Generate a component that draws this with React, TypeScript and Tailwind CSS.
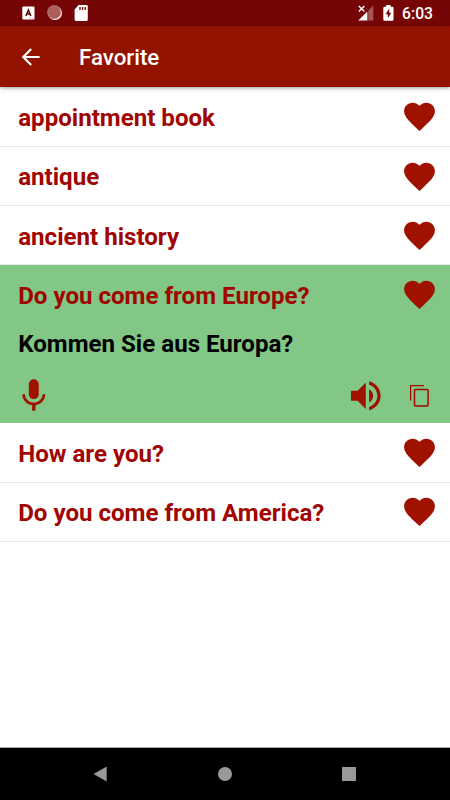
import React from "react"

interface Phrase {
  id: number
  text: string
  translation?: string
}

const PHRASES: Phrase[] = [
  { id: 1, text: "appointment book" },
  { id: 2, text: "antique" },
  { id: 3, text: "ancient history" },
  { id: 4, text: "Do you come from Europe?", translation: "Kommen Sie aus Europa?" },
  { id: 5, text: "How are you?" },
  { id: 6, text: "Do you come from America?" },
]

const StatusBar: React.FC = () => (
  <div className="flex h-[26px] shrink-0 items-center bg-[#760606] pl-[22px] pr-[17px] text-white">
    {/* Keyboard */}
    <svg width="13" height="14" viewBox="0 0 13 14">
      <rect x="0.3" y="0.5" width="12.2" height="13" rx="1" fill="white" />
      <path d="M3.9 10 6.4 3.9 8.9 10M4.8 8h3.2" fill="none" stroke="#5a0505" strokeWidth="1.5" />
      <path d="M7 12h4" stroke="#c99" strokeWidth="0.9" strokeDasharray="1 0.6" />
    </svg>
    {/* Sync spinner */}
    <svg className="ml-3" width="16" height="16" viewBox="0 0 16 16">
      <circle cx="8" cy="8" r="7" fill="white" />
      <circle cx="7.2" cy="7.2" r="6.9" fill="#ad5c5c" />
      <circle cx="7.2" cy="7.2" r="6.5" fill="none" stroke="#d09a9a" strokeWidth="0.9" strokeDasharray="1 1" />
    </svg>
    {/* SD card */}
    <svg className="ml-[11px]" width="14" height="16" viewBox="0 0 14 16">
      <path d="M4.6 0H12.4A1.4 1.4 0 0 1 13.8 1.4V14.6A1.4 1.4 0 0 1 12.4 16H2A1.4 1.4 0 0 1 .6 14.6V4.4z" fill="white" />
      <path d="M6 2v3M8.6 2v3M11.2 2v3" stroke="#760606" strokeWidth="1.3" />
    </svg>
    {/* Signal */}
    <svg className="ml-auto" width="16" height="16" viewBox="0 0 16 16">
      <path d="M9.4 6.4v9.2H.2z" fill="white" />
      <path d="M10.2 5.6 15.3.6v15H10.2z" fill="#a55656" />
      <path d="m.8 1 5.6 5.6M6.4 1 .8 6.6" stroke="white" strokeWidth="1.4" />
    </svg>
    {/* Battery */}
    <svg className="ml-[9px]" width="11" height="16" viewBox="0 0 11 16">
      <path d="M3.2 0h4.4v1.7h1.7q1.2 0 1.2 1.2v11.6q0 1.2-1.2 1.2H1.5q-1.2 0-1.2-1.2V2.9q0-1.2 1.2-1.2h1.7z" fill="white" />
      <path d="M6.2 3.6 2.6 9.3h2.2v4L8.3 7.7H6.2z" fill="#760606" />
    </svg>
    <span className="ml-2 mt-[2px] text-[15.7px] font-medium leading-none">6:03</span>
  </div>
)

const HeartIcon: React.FC = () => (
  <svg width="37" height="37" viewBox="0 0 24 24" fill="#a01200">
    <path d="M12 21.35l-1.45-1.32C5.4 15.36 2 12.28 2 8.5 2 5.42 4.42 3 7.5 3c1.74 0 3.41.81 4.5 2.09C13.09 3.81 14.76 3 16.5 3 19.58 3 22 5.42 22 8.5c0 3.78-3.4 6.86-8.55 11.54L12 21.35z" />
  </svg>
)

const PhraseActions: React.FC = () => (
  <div className="flex h-10 items-center pl-[14px] pr-5">
    <svg width="39.6" height="39.6" viewBox="0 0 24 24" fill="#a01200">
      <path d="M12 14c1.66 0 2.99-1.34 2.99-3L15 5c0-1.66-1.34-3-3-3S9 3.34 9 5v6c0 1.66 1.34 3 3 3zm5.3-3c0 3-2.54 5.1-5.3 5.1S6.7 14 6.7 11H5c0 3.41 2.72 6.23 6 6.72V21h2v-3.28c3.28-.48 6-3.3 6-6.72h-1.7z" />
    </svg>
    <svg className="ml-auto mr-6" width="39.6" height="39.6" viewBox="0 0 24 24" fill="#a01200">
      <path d="M3 9v6h4l5 5V4L7 9H3zm13.5 3c0-1.77-1.02-3.29-2.5-4.03v8.05c1.48-.73 2.5-2.25 2.5-4.02zM14 3.23v2.06c2.89.86 5 3.54 5 6.71s-2.11 5.85-5 6.71v2.06c4.01-.91 7-4.49 7-8.77s-2.99-7.86-7-8.77z" />
    </svg>
    <svg width="20" height="22" viewBox="0 0 20 22" fill="none" stroke="#a00a00" strokeWidth="1.5">
      <path d="M0.5 15.6V1.3q0-.8.8-.8H13.8" />
      <rect x="4.5" y="4.5" width="13.6" height="16.4" rx="0.8" />
    </svg>
  </div>
)

const PhraseRow: React.FC<{ phrase: Phrase }> = ({ phrase }) => {
  const expanded = Boolean(phrase.translation)

  return (
    <li className={expanded ? "h-[158.3px] bg-[#82c785]" : "h-[59.2px] border-b border-[#e6e6e6]"}>
      <div className="flex h-[58.2px] items-center justify-between pl-[18.2px] pr-3 pt-[0.6px]">
        <span className="pt-[2.6px] text-[24.1px] font-bold leading-none text-[#a00500]">{phrase.text}</span>
        <HeartIcon />
      </div>
      {expanded && (
        <>
          <p className="flex h-[53px] items-center pb-[10.5px] pl-[18.2px] text-[24.1px] font-bold leading-none text-black">
            {phrase.translation}
          </p>
          <PhraseActions />
        </>
      )}
    </li>
  )
}

const NavBar: React.FC = () => (
  <nav className="flex h-[53px] shrink-0 items-center justify-between border-t border-[#aaa] bg-black pl-[93px] pr-[94px]">
    <svg width="14" height="16" viewBox="0 0 14 16" fill="#999">
      <path d="M13.7.6v14.8L.5 8z" />
    </svg>
    <div className="size-[14px] rounded-full bg-[#999]" />
    <div className="size-[14px] bg-[#999]" />
  </nav>
)

export default function App() {
  return (
    <div className="flex h-[800px] w-[450px] flex-col overflow-hidden bg-white font-['Roboto',sans-serif]">
      <StatusBar />
      <header className="z-10 flex h-[61px] shrink-0 items-center bg-[#941300] pl-[22px] text-white shadow-[0_1px_4px_rgba(0,0,0,0.4)]">
        <svg width="18" height="18" viewBox="0 0 18 18" fill="none" stroke="white" strokeWidth="2.1">
          <path d="M17.6 9H1.5M9.2 1 1.3 9l7.9 8" />
        </svg>
        <h1 className="ml-[39px] pt-[2px] text-[22.3px] font-medium leading-none">Favorite</h1>
      </header>
      <ul className="flex-1 pt-[0.5px]">
        {PHRASES.map(phrase => (
          <PhraseRow key={phrase.id} phrase={phrase} />
        ))}
      </ul>
      <NavBar />
    </div>
  )
}
